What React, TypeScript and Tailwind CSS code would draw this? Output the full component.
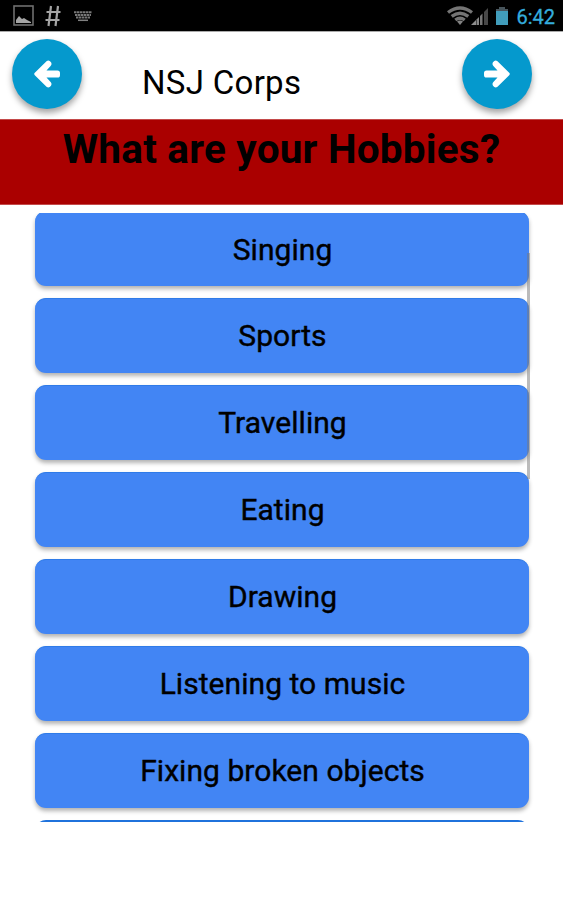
import React from "react";

const hobbies = [
  "Singing",
  "Sports",
  "Travelling",
  "Eating",
  "Drawing",
  "Listening to music",
  "Fixing broken objects",
];

function StatusBar() {
  return (
    <div className="flex h-[31px] shrink-0 items-center justify-between bg-black pl-[13px] pr-[8px]">
      <div className="flex items-center">
        <svg width="21" height="22" viewBox="0 0 21 22" fill="none">
          <rect x="1" y="1" width="19" height="19" stroke="#6f6f6f" strokeWidth="1.6" />
          <path d="M3 18v-3l3-4 3 3 2-1 3 2 4 2v1z" fill="#a5a5a5" />
        </svg>
        <svg className="ml-[11px]" width="16" height="22" viewBox="0 0 16 22" fill="none" stroke="#a5a5a5" strokeWidth="2.2">
          <path d="M6 1L3.500 21M13 1l-2.500 20M1.500 7h14M.5 15h14" />
        </svg>
        <svg className="ml-[13px]" width="18" height="12" viewBox="0 0 18 12" fill="none" stroke="#777" strokeWidth="2">
          <path d="M0 2.200h18M1 5h16" strokeDasharray="2.500 0.500" />
          <path d="M2 7.500h14" strokeDasharray="2.500 0.500" />
          <path d="M4 10.300h10" stroke="#808080" strokeWidth="1.500" />
        </svg>
      </div>
      <div className="flex items-center">
        <svg width="26" height="20" viewBox="0 0 26 20" fill="none" stroke="#757575" strokeWidth="3.400">
          <path d="M1 6.500Q13-2.500 25 6.500M4.700 10.300Q13 4 21.300 10.300M8.300 14Q13 10.500 17.700 14" />
          <path d="M10 15.500q3-2 6 0L13 19z" fill="#828282" stroke="none" />
        </svg>
        <svg className="-ml-[2px]" width="17" height="20" viewBox="0 0 17 20">
          <path d="M0 19L5 14v5z" fill="#8d8d8d" />
          <path d="M5.500 13.500L8 11v8H5.500z" fill="#858585" />
          <path d="M9 10l2.500-2.500V19H9z" fill="#777" />
          <path d="M13 6l4-4v17h-4z" fill="#484848" />
        </svg>
        <svg className="ml-[7px]" width="14" height="20" viewBox="0 0 14 20">
          <path d="M4 1h6v2h3v3H1V3h3z" fill="#47545b" />
          <path d="M1 5h12v14H1z" fill="#419dbb" />
        </svg>
        <span className="ml-[7px] mt-[3px] text-[20px] leading-[31px] text-[#35aede] [-webkit-text-stroke:0.300px_#35aede]">6:42</span>
      </div>
    </div>
  );
}

function ArrowButton({ direction }: { direction: "left" | "right" }) {
  return (
    <button
      aria-label={direction === "left" ? "Previous" : "Next"}
      className="flex size-[70px] items-center justify-center rounded-full bg-[#0599cd] shadow-[0_4px_6px_rgba(0,0,0,0.36)]"
    >
      <svg
        className={direction === "left" ? "" : "rotate-180"}
        width="26"
        height="28"
        viewBox="0 0 26 28"
        fill="#fff"
      >
        <path d="M.8 12.800L12.500 1.200Q15 -.4 17 2.200Q18.200 4.200 16.600 6L12.500 10.400H23.500Q26 10.400 26 13V15Q26 17.600 23.500 17.600H12.500L16.600 22Q18.200 23.800 17 25.800Q15 28.400 12.500 26.800L.8 15.200Q-.4 14 .8 12.800z" />
      </svg>
    </button>
  );
}

export default function App() {
  return (
    <div className="flex h-[900px] w-[563px] flex-col overflow-hidden bg-white font-[Roboto,sans-serif] text-black">
      <StatusBar />
      <header className="flex h-[88px] shrink-0 items-start border-t border-[#aaa] pl-[12px] pr-[31px] pt-[7px]">
        <ArrowButton direction="left" />
        <h1 className="ml-[60px] mt-[24px] flex-1 whitespace-nowrap text-[33px] leading-[40px] tracking-[0.300px]">
          NSJ Corps
        </h1>
        <ArrowButton direction="right" />
      </header>
      <section className="h-[86px] shrink-0 border-y border-[#c44a4a] bg-[#aa0000] pt-[5px] text-center">
        <h2 className="whitespace-nowrap text-[40.500px] font-bold leading-[48px] tracking-[0.220px]">What are your Hobbies?</h2>
      </section>
      <main className="mt-[8px] grid h-[609px] shrink-0 grid-cols-1 overflow-hidden pl-[32px] pr-[31px]">
        <ul className="col-start-1 row-start-1 -mt-[2px] flex h-[700px] flex-col gap-[11.950px] px-[3px]">
          {hobbies.map((hobby) => (
            <li
              key={hobby}
              className="flex h-[75px] shrink-0 items-center justify-center rounded-[11px] border-t border-[#2f7be8] bg-[#4285f4] pl-px text-[30px] tracking-[0.050px] shadow-[0_3px_4px_rgba(0,0,0,0.3)] [-webkit-text-stroke:0.400px_#000]"
            >
              <span className="whitespace-nowrap">{hobby}</span>
            </li>
          ))}
          <li className="h-[75px] shrink-0 rounded-[11px] border-t-2 border-[#1f72dc] bg-[#4285f4]" />
        </ul>
        <div className="z-10 col-start-1 row-start-1 mr-[2px] mt-[40px] h-[226px] w-[3px] justify-self-end bg-[#777]/50" />
      </main>
    </div>
  );
}
